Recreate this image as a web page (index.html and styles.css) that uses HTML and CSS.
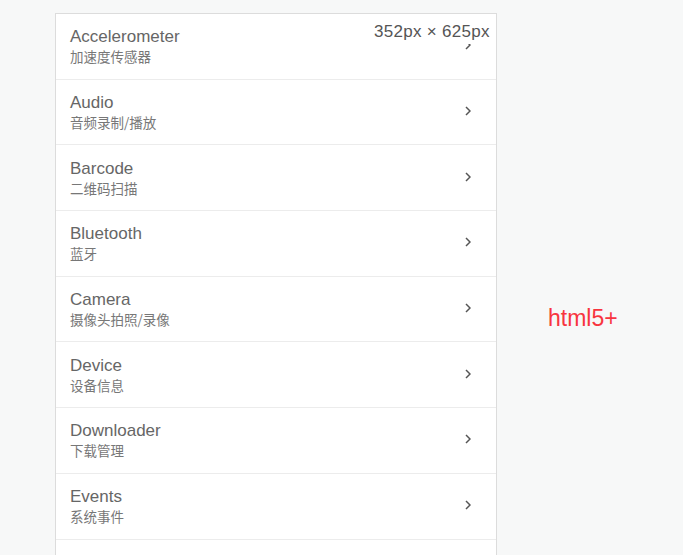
FILE: index.html
```html
<!DOCTYPE html>
<html lang="zh">
<head>
<meta charset="utf-8">
<link rel="stylesheet" href="styles.css">
</head>
<body>
<div class="page">
  <div class="phone">
    <div class="size-label">352px × 625px</div>
    <ul class="list">
      <li class="item"><div class="text"><div class="title">Accelerometer</div><div class="sub">加速度传感器</div></div><svg class="chev" viewBox="0 0 6 10"><polyline points="1,1 5,5 1,9"/></svg></li>
      <li class="item"><div class="text"><div class="title">Audio</div><div class="sub">音频录制/播放</div></div><svg class="chev" viewBox="0 0 6 10"><polyline points="1,1 5,5 1,9"/></svg></li>
      <li class="item"><div class="text"><div class="title">Barcode</div><div class="sub">二维码扫描</div></div><svg class="chev" viewBox="0 0 6 10"><polyline points="1,1 5,5 1,9"/></svg></li>
      <li class="item"><div class="text"><div class="title">Bluetooth</div><div class="sub">蓝牙</div></div><svg class="chev" viewBox="0 0 6 10"><polyline points="1,1 5,5 1,9"/></svg></li>
      <li class="item"><div class="text"><div class="title">Camera</div><div class="sub">摄像头拍照/录像</div></div><svg class="chev" viewBox="0 0 6 10"><polyline points="1,1 5,5 1,9"/></svg></li>
      <li class="item"><div class="text"><div class="title">Device</div><div class="sub">设备信息</div></div><svg class="chev" viewBox="0 0 6 10"><polyline points="1,1 5,5 1,9"/></svg></li>
      <li class="item"><div class="text"><div class="title">Downloader</div><div class="sub">下载管理</div></div><svg class="chev" viewBox="0 0 6 10"><polyline points="1,1 5,5 1,9"/></svg></li>
      <li class="item"><div class="text"><div class="title">Events</div><div class="sub">系统事件</div></div><svg class="chev" viewBox="0 0 6 10"><polyline points="1,1 5,5 1,9"/></svg></li>
      <li class="item"></li>
    </ul>
  </div>
  <div class="brand">html5+</div>
</div>
</body>
</html>
```
FILE: styles.css
```css
html, body {
  margin: 0;
  padding: 0;
  background: #f7f8f8;
  height: 100%;
  overflow: hidden;
}
.page {
  display: flex;
  align-items: flex-start;
  padding: 13px 0 0 55px;
  font-family: "Liberation Sans", Arial, "Noto Sans CJK SC", sans-serif;
}
.phone {
  position: relative;
  width: 440px;
  height: 560px;
  background: #fff;
  border: 1px solid #dcdcdc;
  border-bottom: none;
  overflow: hidden;
  flex: none;
}
.size-label {
  position: absolute;
  left: 318px;
  top: 6px;
  padding: 0 6px 0 0;
  line-height: 24px;
  font-size: 17px;
  letter-spacing: 0.3px;
  color: #555;
  background: #fff;
  z-index: 2;
}
.list {
  list-style: none;
  margin: 0;
  padding: 0;
}
.item {
  box-sizing: border-box;
  height: 65.7px;
  display: flex;
  align-items: center;
  padding: 0 25px 0 14px;
  border-bottom: 1px solid #ececec;
}
.text {
  flex: 1;
}
.title {
  font-size: 17px;
  line-height: 20px;
  color: #666;
}
.sub {
  font-size: 13.5px;
  line-height: 18px;
  color: #777;
  font-family: "Noto Sans CJK SC", sans-serif;
}
.chev {
  width: 6px;
  height: 10px;
  margin-top: -2px;
  fill: none;
  stroke: #555;
  stroke-width: 1.5;
}
.brand {
  margin: 292px 0 0 51px;
  font-size: 23px;
  line-height: 26px;
  color: #f8353f;
}
```
